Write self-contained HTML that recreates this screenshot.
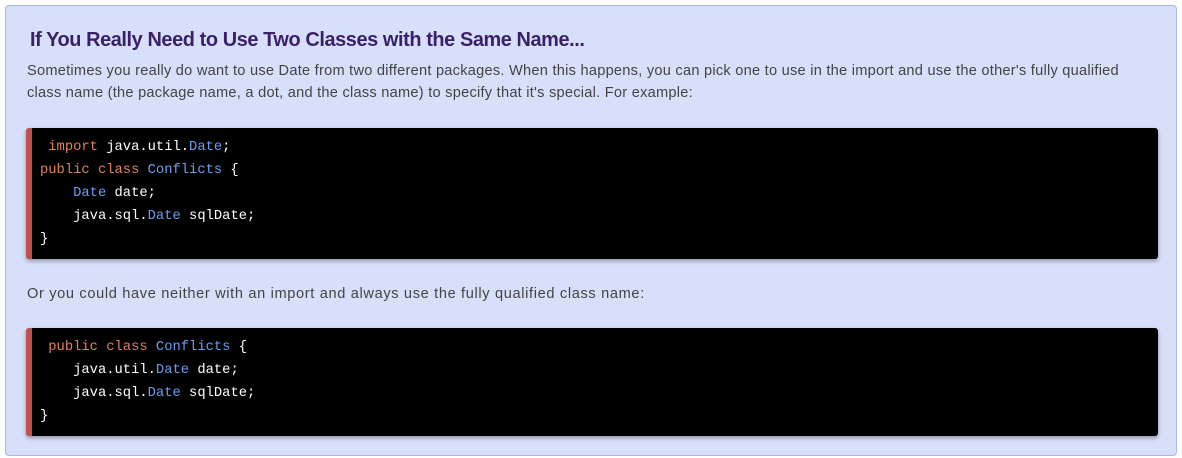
<!DOCTYPE html>
<html><head><style>
body{margin:0;background:#fff;width:1182px;height:458px;overflow:hidden;font-family:"Liberation Sans",Arial,sans-serif}
.box{position:absolute;left:5px;top:5px;width:1170px;height:449px;background:#d8dffa;border:1px solid #aab6e6;border-radius:4px}
h2{position:absolute;left:24px;top:23px;margin:0;font-size:19.9px;font-weight:bold;color:#3a1f6b;letter-spacing:-0.4px}
p{position:absolute;left:21px;margin:0;font-size:14.6px;line-height:22px;color:#444;white-space:nowrap;letter-spacing:0.25px}
pre{position:absolute;left:20px;width:1132px;margin:0;background:#000;border-left:6px solid #c0504d;border-radius:3px;box-shadow:0 2px 4px rgba(0,0,0,.35);font-family:"Liberation Mono",monospace;font-size:13.8px;line-height:23px;color:#fff;padding:8px 0 0 8px;box-sizing:border-box}
.k{color:#e0845a}.t{color:#6d9ef2}
</style></head><body>
<div class="box">
<h2>If You Really Need to Use Two Classes with the Same Name...</h2>
<p style="top:54px">Sometimes you really do want to use Date from two different packages. When this happens, you can pick one to use in the import and use the other's fully qualified<br>class name (the package name, a dot, and the class name) to specify that it's special. For example:</p>
<pre style="top:122px;height:131px"> <span class="k">import</span> java.util.<span class="t">Date</span>;
<span class="k">public class</span> <span class="t">Conflicts</span> {
    <span class="t">Date</span> date;
    java.sql.<span class="t">Date</span> sqlDate;
}</pre>
<p style="top:277px;letter-spacing:0.65px">Or you could have neither with an import and always use the fully qualified class name:</p>
<pre style="top:322px;height:108px"> <span class="k">public class</span> <span class="t">Conflicts</span> {
    java.util.<span class="t">Date</span> date;
    java.sql.<span class="t">Date</span> sqlDate;
}</pre>
</div>
</body></html>
